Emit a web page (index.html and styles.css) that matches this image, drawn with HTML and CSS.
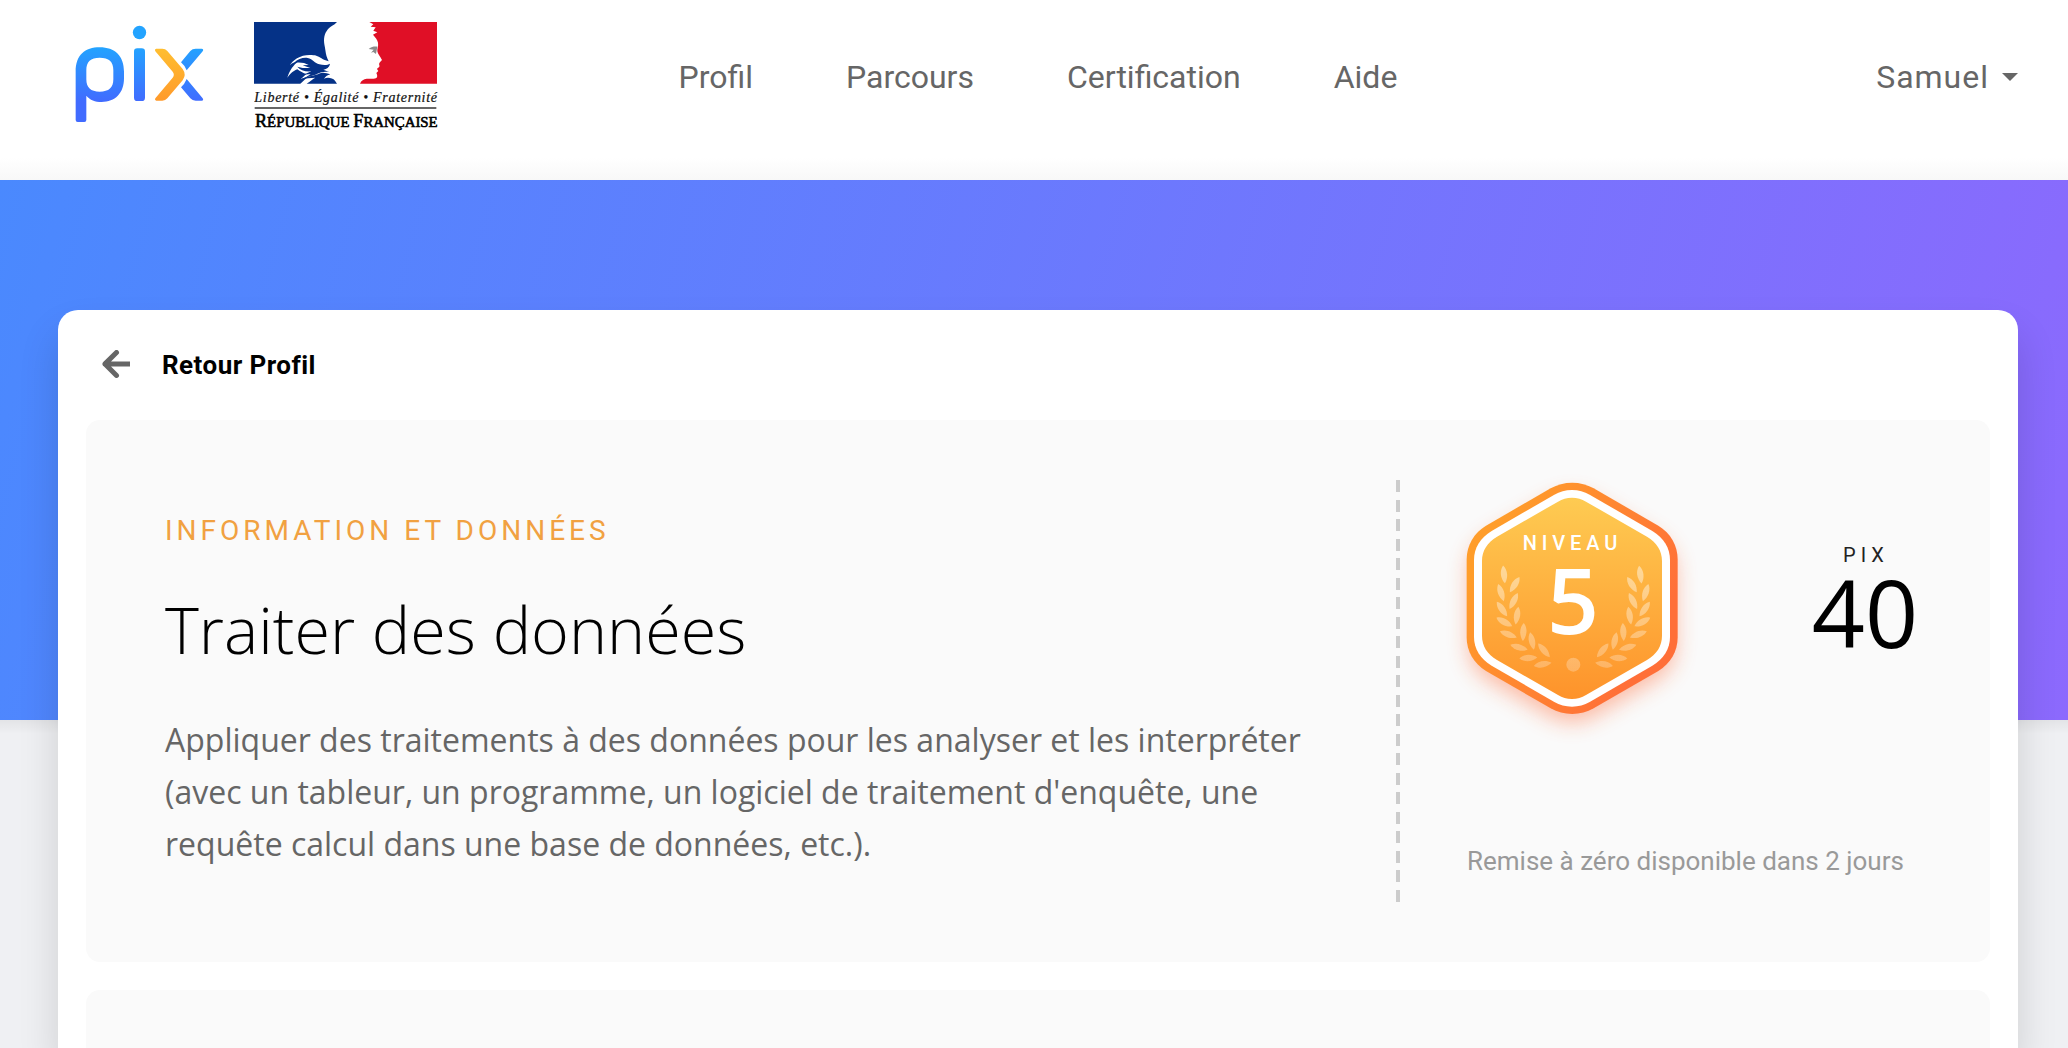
FILE: index.html
```
<!DOCTYPE html>
<html lang="fr">
<head>
<meta charset="utf-8">
<title>Pix - Traiter des données</title>
<link rel="stylesheet" href="styles.css">
</head>
<body>
<header class="header">
  <div class="logos">
    <svg class="logo-pix" viewBox="45 45 387 294" role="img" aria-label="Pix">
      <defs>
        <linearGradient id="pixBlue" gradientUnits="userSpaceOnUse" x1="0" y1="112" x2="0" y2="276"><stop offset="0" stop-color="#23a3ff"/><stop offset="1" stop-color="#416bff"/></linearGradient>
        <linearGradient id="pixOrange" gradientUnits="userSpaceOnUse" x1="0" y1="116" x2="0" y2="272"><stop offset="0" stop-color="#ffbe30"/><stop offset="1" stop-color="#ff9a2b"/></linearGradient>
      </defs>
      <g fill="url(#pixBlue)">
        <path fill-rule="evenodd" d="M47 185C47 135 75 112 119 112C165 112 192 138 192 185V205C192 250 165 276 125 276C105 276 90 270 79 257V330Q79 336 73 336H53Q47 336 47 330ZM79 180V208C79 233 92 245 119 245C147 245 160 233 160 208V180C160 155 147 143 119 143C92 143 79 155 79 180Z"/>
        <rect x="222" y="115" width="33" height="158" rx="10"/>
        <circle cx="238.500" cy="67.500" r="20"/>
        <path d="M363 157L391 123Q397 116 407 116H425Q432 117 428 124L380 181Q374 166 363 157Z"/>
        <path d="M380 207L428 265Q432 272 425 272H407Q397 272 391 265L363 232Q374 222 380 207Z"/>
      </g>
      <path fill="url(#pixOrange)" d="M289 116H307Q316 116 322 123L368 177Q380 194 368 211L322 265Q316 272 307 272H289Q283 271 286 265L338 203Q345 194 338 185L286 124Q283 117 289 116Z"/>
    </svg>
    <svg class="logo-rf" viewBox="42 36 552 330" role="img" aria-label="République Française">
      <path fill="#fff" d="M42 36H591V221H42Z"/>
      <path fill="#053287" d="M42 36H291L284 43C266 52 257 64 253 80C250 96 255 108 256 120C258 134 260 142 266 154L254 150C240 144 232 136 221 136C204 133 186 136 171 145C163 150 155 157 149 166C158 158 166 155 176 153C160 166 149 180 142 203C154 188 161 182 172 178C180 184 190 190 199 192L182 208L206 198L181 221H42Z"/>
      <path fill="#053287" d="M162 159C174 146 190 142 203 144C219 147 224 160 238 163C250 166 263 166 270 161C268 172 260 177 250 179L268 186C248 184 240 188 226 194L196 203L212 192L190 194L214 184C196 186 180 180 172 170L188 174L211 174L188 166L206 165C194 158 178 156 162 159Z"/>
      <path fill="#053287" d="M180 209C205 198 224 198 240 190C250 186 260 190 271 193C262 195 258 199 252 206C262 201 277 203 285 212L291 221H200C212 214 216 208 226 203C212 203 196 205 180 209Z"/>
      <path fill="#e00f26" d="M388 36H591V221H360C364 211 371 207 380 206C391 206 408 208 411 202C413 196 410 192 409 189L415 183L411 177C414 173 420 172 418 166C415 160 420 156 426 150C421 140 413 132 412 124C411 116 416 108 414 98C412 88 406 82 399 74L412 67L400 62L407 52L392 50L400 43Z"/>
      <path fill="#8b8b8b" d="M386 117C395 110 403 109 412 110L408 132L400 126L393 128L401 119Z"/>
      <path stroke="#333" stroke-width="4" d="M44 294H589"/>
      <g font-family="'Liberation Serif', serif" fill="#111">
        <text class="logo-rf-motto" x="43" y="275" textLength="548">Liberté • Égalité • Fraternité</text>
        <text class="logo-rf-name" x="45" y="352" textLength="548" lengthAdjust="spacingAndGlyphs"><tspan font-size="55">R</tspan><tspan font-size="45">ÉPUBLIQUE </tspan><tspan font-size="55">F</tspan><tspan font-size="45">RANÇAISE</tspan></text>
      </g>
    </svg>
  </div>
  <nav class="nav">
    <a>Profil</a><a>Parcours</a><a>Certification</a><a>Aide</a>
  </nav>
  <div class="user">Samuel<span class="caret"></span></div>
</header>
<main class="page">
  <section class="card">
    <a class="back">
      <svg class="back-icon" viewBox="0 0 28 28"><path d="M14.500 2.500L3 13.900L14.500 25.400M3 13.900H28"/></svg>
      Retour Profil
    </a>
    <div class="panel">
      <div class="about">
        <p class="area">INFORMATION ET DONNÉES</p>
        <h1>Traiter des données</h1>
        <p class="description">Appliquer des traitements à des données pour les analyser et les interpréter (avec un tableur, un programme, un logiciel de traitement d'enquête, une requête calcul dans une base de données, etc.).</p>
      </div>
      <div class="divider"></div>
      <div class="results">
        <div class="scores">
          <svg class="badge" viewBox="0 0 780 870">
            <defs>
              <linearGradient id="ring" x1="0" y1="0.200" x2="1" y2="0.800"><stop offset="0.100" stop-color="#ff9d2a"/><stop offset="0.850" stop-color="#ff6f38"/></linearGradient>
              <linearGradient id="fill" x1="0" y1="0" x2="0" y2="1"><stop offset="0" stop-color="#fecb52"/><stop offset="1" stop-color="#fe932b"/></linearGradient>
              <filter id="glow" x="-30%" y="-30%" width="160%" height="160%"><feGaussianBlur stdDeviation="32"/></filter>
              <path id="hex" d="M396.500 68C420 68 441 74 461 85L655 197C691 219 713 255 713 298V532C713 575 691 611 655 633L461 745C441 756 420 762 396.500 762S352 756 332 745L138 633C102 611 80 575 80 532V298C80 255 102 219 138 197L332 85C352 74 373 68 396.500 68Z"/>
              <path id="leaf" d="M0 -27C13 -12 12 11 0 27C-12 11 -13 -12 0 -27Z"/>
              <g id="branch">
                <use href="#leaf" transform="translate(183 398) rotate(-18)"/>
                <use href="#leaf" transform="translate(186 447) rotate(-35)"/>
                <use href="#leaf" transform="translate(193 486) rotate(-61)"/>
                <use href="#leaf" transform="translate(205 523) rotate(-70)"/>
                <use href="#leaf" transform="translate(237 562) rotate(-74)"/>
                <use href="#leaf" transform="translate(265 594) rotate(-93)"/>
                <use href="#leaf" transform="translate(308 613) rotate(-100)"/>
                <use href="#leaf" transform="translate(224 374) rotate(32)"/>
                <use href="#leaf" transform="translate(221 423) rotate(27)"/>
                <use href="#leaf" transform="translate(231 467) rotate(9)"/>
                <use href="#leaf" transform="translate(250 516) rotate(3)"/>
                <use href="#leaf" transform="translate(276 543) rotate(-12)"/>
                <use href="#leaf" transform="translate(312 571) rotate(-40)"/>
              </g>
              <linearGradient id="laurel" gradientUnits="userSpaceOnUse" x1="0" y1="318" x2="0" y2="630"><stop offset="0" stop-color="#fff" stop-opacity="0.460"/><stop offset="1" stop-color="#fff" stop-opacity="0.250"/></linearGradient>
              <mask id="laurelMask" maskUnits="userSpaceOnUse" x="100" y="300" width="600" height="360">
                <g fill="#fff">
                  <use href="#branch"/>
                  <use href="#branch" transform="translate(800 0) scale(-1 1)"/>
                  <use href="#leaf" transform="translate(192 343) rotate(-6)"/>
                  <use href="#leaf" transform="translate(601 344) rotate(-8)"/>
                  <circle cx="400" cy="614" r="21"/>
                </g>
              </mask>
            </defs>
            <use href="#hex" fill="#ff5a20" opacity="0.400" filter="url(#glow)" transform="translate(8 40) scale(0.980)"/>
            <use href="#hex" fill="url(#ring)"/>
            <path fill="#fff" d="M396 90C416 90 433 95 449 104L637 213C671 234 690 263 690 300V530C690 567 671 596 637 617L449 726C433 735 416 740 396 740S359 735 343 726L155 617C121 596 102 567 102 530V300C102 263 121 234 155 213L343 104C359 95 376 90 396 90Z"/>
            <path fill="url(#fill)" d="M396 113C412 113 425 117 438 125L621 230C650 247 666 272 666 303V527C666 558 650 583 621 600L438 705C425 713 412 717 396 717S367 713 354 705L171 600C142 583 126 558 126 527V303C126 272 142 247 171 230L354 125C367 117 380 113 396 113Z"/>
            <rect x="100" y="300" width="600" height="360" fill="url(#laurel)" mask="url(#laurelMask)"/>
            <text class="badge-label" x="248" y="269" textLength="284">NIVEAU</text>
            <text class="badge-level" x="399" y="522" text-anchor="middle">5</text>
          </svg>
          <div class="pix">
            <span class="pix-label">PIX</span>
            <span class="pix-value">40</span>
          </div>
        </div>
        <p class="reset">Remise à zéro disponible dans 2 jours</p>
      </div>
    </div>
    <div class="panel panel-next"></div>
  </section>
</main>
</body>
</html>
```
FILE: styles.css
```
* { box-sizing: border-box; }
body {
  margin: 0;
  height: 1048px;
  overflow: hidden;
  background: #eff0f3;
  font-family: Roboto, sans-serif;
  color: #000;
}
p, h1 { margin: 0; }

.header {
  display: flex;
  height: 180px;
  padding: 0 50px 0 75px;
  background: linear-gradient(#fff 158px, #f8f8f8 180px);
  color: #666;
  font-size: 32px;
  line-height: 38px;
}
.logos { display: flex; width: 603.5px; gap: 50px; }
.logo-pix { width: 129px; height: 98px; margin-top: 25px; }
.logo-rf { width: 184px; height: 110px; margin-top: 22px; }
.logo-rf-motto { font-size: 42px; font-style: italic; stroke: #111; stroke-width: .6px; }
.logo-rf-name { fill: #000; stroke: #000; stroke-width: 1.8px; }
.nav { display: flex; gap: 93px; padding-top: 58px; }
.user {
  display: flex;
  align-items: center;
  gap: 13px;
  height: 38px;
  margin: 58px 0 0 auto;
  letter-spacing: 1px;
}
.caret {
  border: 8px solid transparent;
  border-top-color: #666;
  border-bottom: 0;
}

.page {
  height: 868px;
  padding: 130px 50px 0 58px;
  background:
    linear-gradient(rgba(0, 0, 0, .05), transparent) no-repeat 0 540px / 100% 14px,
    linear-gradient(105deg, #4a89fe, #8c69fd) no-repeat 0 0 / 100% 540px;
}
.card {
  height: 738px;
  padding: 0 28px;
  overflow: hidden;
  border-radius: 20px 20px 0 0;
  background: #fff;
  box-shadow: 0 24px 40px rgba(0, 0, 0, .14);
}
.back {
  display: flex;
  align-items: center;
  gap: 32px;
  height: 110px;
  padding-left: 16px;
  font-size: 26px;
  font-weight: 700;
  letter-spacing: .45px;
}
.back-icon {
  width: 28px;
  height: 28px;
  margin-bottom: 2px;
  fill: none;
  stroke: #666;
  stroke-width: 5;
  stroke-linecap: round;
  stroke-linejoin: round;
}
.panel {
  display: flex;
  height: 542px;
  border-radius: 14px;
  background: #fafafa;
}
.panel-next { height: 58px; margin-top: 28px; border-radius: 14px 14px 0 0; }
.about { width: 1310px; padding: 93px 79px 0 79px; }
.area {
  color: #f1a141;
  font-size: 28px;
  line-height: 36px;
  letter-spacing: 4px;
}
h1 {
  margin-top: 35px;
  font: 300 64.6px/90px "Open Sans", sans-serif;
}
.description {
  margin-top: 40px;
  color: #666;
  font: 400 32px/52px "Open Sans", sans-serif;
}
.divider {
  width: 4px;
  height: 422px;
  margin-top: 60px;
  background: repeating-linear-gradient(#ccc 0 12px, transparent 12px 19.520px);
}
.results { flex: 1; }
.scores { display: flex; height: 422px; padding: 40px 0 0 40px; }
.badge { width: 260px; height: 290px; }
.badge-label { fill: #fff; font: 500 60px Roboto, sans-serif; }
.badge-level { fill: #fff; font: 600 273px "Open Sans", sans-serif; }
.pix {
  display: flex;
  flex-direction: column;
  align-items: center;
  width: 130px;
  margin: 81px 0 0 100px;
}
.pix-label { padding-left: 2px; font-size: 20px; line-height: 28px; letter-spacing: 5px; color: #222; }
.pix-value { font: 400 93px/87px "Open Sans", sans-serif; }
.reset { padding-left: 67px; color: #999; font-size: 26px; line-height: 38px; }
```
